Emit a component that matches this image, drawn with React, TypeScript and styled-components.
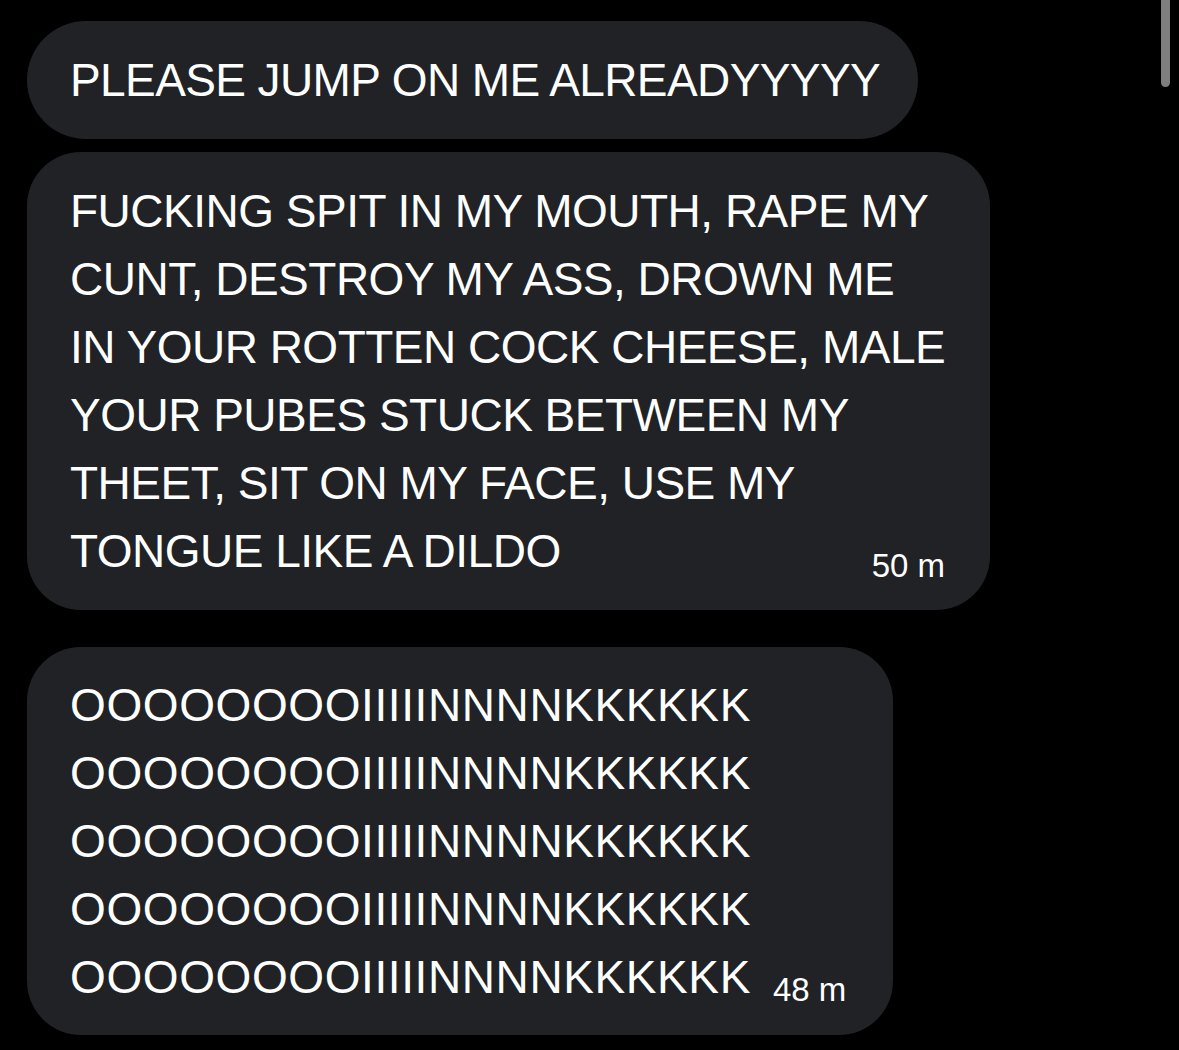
import React from "react";
import styled, { createGlobalStyle } from "styled-components";

const Global = createGlobalStyle`
  html, body { margin: 0; padding: 0; background: #000; }
  body { font-family: "Liberation Sans", Arial, sans-serif; overflow: hidden; }
`;

const Screen = styled.div`
  position: relative;
  width: 1179px;
  height: 1050px;
  background: #000;
  overflow: hidden;
`;

const Thread = styled.div`
  display: flex;
  flex-direction: column;
  align-items: flex-start;
  padding: 21px 0 0 27px;
`;

const Bubble = styled.div<{ $w: number; $r: number; $gap: number; $pad: number; $ls: number }>`
  box-sizing: border-box;
  width: ${(p) => p.$w}px;
  margin-bottom: ${(p) => p.$gap}px;
  padding: ${(p) => p.$pad}px 45px ${(p) => p.$pad}px 43px;
  background: #202226;
  border-radius: ${(p) => p.$r}px;
  color: #fff;
  font-size: 46px;
  line-height: 68px;
  letter-spacing: ${(p) => p.$ls}px;
`;

const Line = styled.div`
  white-space: nowrap;
`;

const LastLine = styled.div<{ $spread?: boolean }>`
  display: flex;
  align-items: baseline;
  justify-content: ${(p) => (p.$spread ? "space-between" : "flex-start")};
  white-space: nowrap;
  height: 68px;
`;

const Stamp = styled.span<{ $ml?: number; $drop: number }>`
  font-size: 33px;
  line-height: 34px;
  letter-spacing: 0;
  margin-left: ${(p) => p.$ml ?? 0}px;
  position: relative;
  top: ${(p) => p.$drop}px;
`;

const ScrollThumb = styled.div`
  position: absolute;
  top: -10px;
  right: 9px;
  width: 9px;
  height: 97px;
  border-radius: 5px;
  background: #7f7f7f;
`;

const second = [
  "FUCKING SPIT IN MY MOUTH, RAPE MY",
  "CUNT, DESTROY MY ASS, DROWN ME",
  "IN YOUR ROTTEN COCK CHEESE, MALE",
  "YOUR PUBES STUCK BETWEEN MY",
  "THEET, SIT ON MY FACE, USE MY",
];

const oink = "OOOOOOOOIIIIINNNNKKKKKK";

export default function App() {
  return (
    <Screen>
      <Global />
      <Thread>
        <Bubble $w={891} $r={59} $gap={13} $pad={25} $ls={-0.6}>
          <Line>PLEASE JUMP ON ME ALREADYYYYY</Line>
        </Bubble>
        <Bubble $w={963} $r={54} $gap={37} $pad={25} $ls={-0.5}>
          {second.map((l) => (
            <Line key={l}>{l}</Line>
          ))}
          <LastLine $spread>
            <span>TONGUE LIKE A DILDO</span>
            <Stamp $drop={10}>50 m</Stamp>
          </LastLine>
        </Bubble>
        <Bubble $w={866} $r={54} $gap={0} $pad={24} $ls={0.6}>
          {[0, 1, 2, 3].map((i) => (
            <Line key={i}>{oink}</Line>
          ))}
          <LastLine>
            <span>{oink}</span>
            <Stamp $ml={22} $drop={8}>48 m</Stamp>
          </LastLine>
        </Bubble>
      </Thread>
      <ScrollThumb />
    </Screen>
  );
}
